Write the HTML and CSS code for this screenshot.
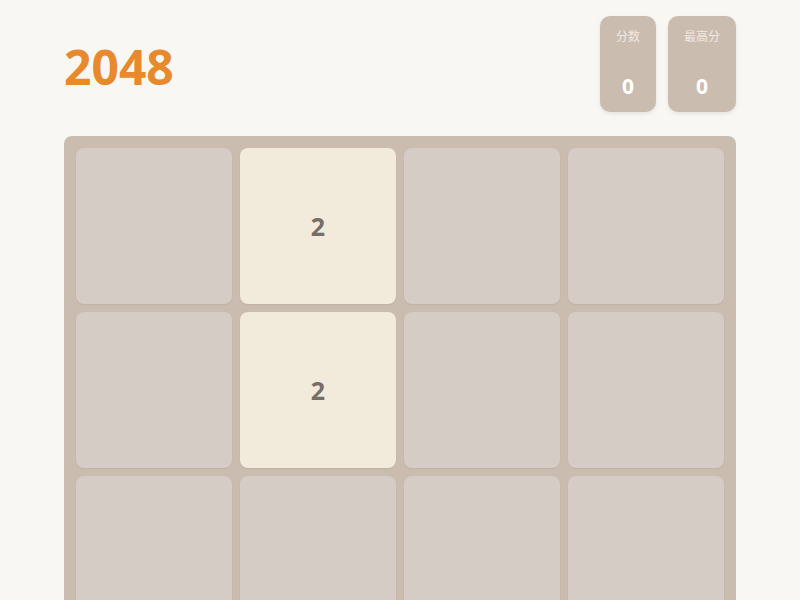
FILE: index.html
```html
<!DOCTYPE html>
<html lang="zh">
<head>
<meta charset="utf-8">
<title>2048</title>
<link rel="stylesheet" href="styles.css">
</head>
<body>
<main class="game">
  <header class="game-header">
    <h1 class="title">2048</h1>
    <div class="scores">
      <div class="score-box">
        <span class="score-label">分数</span>
        <span class="score-value">0</span>
      </div>
      <div class="score-box">
        <span class="score-label">最高分</span>
        <span class="score-value">0</span>
      </div>
    </div>
  </header>
  <section class="board">
    <div class="cell"></div>
    <div class="cell tile-2">2</div>
    <div class="cell"></div>
    <div class="cell"></div>
    <div class="cell"></div>
    <div class="cell tile-2">2</div>
    <div class="cell"></div>
    <div class="cell"></div>
    <div class="cell"></div>
    <div class="cell"></div>
    <div class="cell"></div>
    <div class="cell"></div>
    <div class="cell"></div>
    <div class="cell"></div>
    <div class="cell"></div>
    <div class="cell"></div>
  </section>
</main>
</body>
</html>
```
FILE: styles.css
```css
* { box-sizing: border-box; }

body {
  margin: 0;
  background: #f9f7f4;
  font-family: "Noto Sans", "Noto Sans CJK SC", sans-serif;
  color: #776e65;
}

.game {
  width: 672px;
  margin: 0 auto;
  padding-top: 16px;
}

.game-header {
  display: flex;
  justify-content: space-between;
  align-items: center;
}

.title {
  margin: 0;
  padding-top: 5px;
  font-size: 48px;
  font-weight: 700;
  line-height: 1;
  color: #e8892c;
}

.scores {
  display: flex;
  gap: 12px;
}

.score-box {
  height: 96px;
  padding: 11px 16px 13px;
  display: flex;
  flex-direction: column;
  justify-content: space-between;
  align-items: center;
  background: #cbbcb0;
  border-radius: 10px;
  box-shadow: 0 2px 4px rgba(0, 0, 0, 0.08);
}

.score-label {
  font-size: 12px;
  line-height: 20px;
  color: #f1e9e1;
}

.score-value {
  font-size: 21px;
  font-weight: 700;
  line-height: 26px;
  color: #ffffff;
}

.board {
  margin-top: 24px;
  padding: 12px;
  display: grid;
  grid-template-columns: repeat(4, 156px);
  grid-auto-rows: 156px;
  gap: 8px;
  background: #cbbcb0;
  border-radius: 8px;
}

.cell {
  display: flex;
  align-items: center;
  justify-content: center;
  background: #d6ccc6;
  border-radius: 8px;
  box-shadow: 0 1px 2px rgba(0, 0, 0, 0.06);
  font-size: 25px;
  font-weight: 700;
}

.tile-2 {
  background: #f2eadb;
  color: #776e65;
}
```
